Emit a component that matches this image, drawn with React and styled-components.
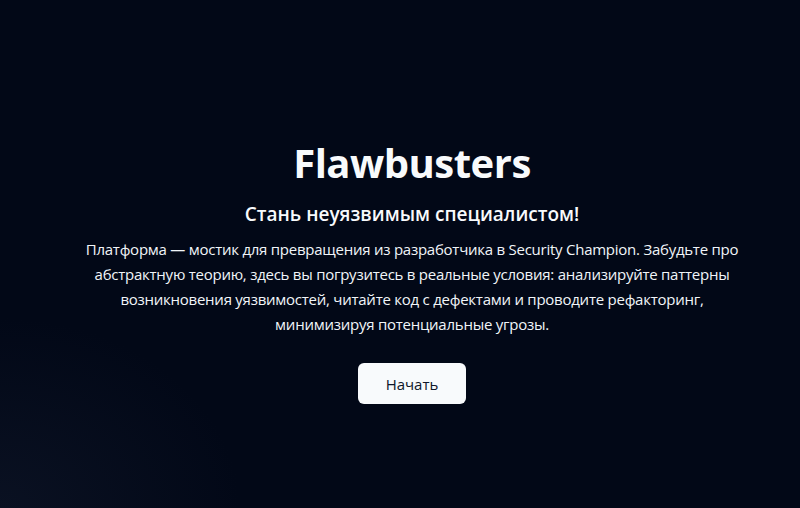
import React from "react";
import styled, { createGlobalStyle } from "styled-components";

const Global = createGlobalStyle`
  html, body { margin: 0; padding: 0; background: #020817; }
  body { font-family: "Open Sans", "Noto Sans", sans-serif; }
`;

const Page = styled.main`
  min-height: 508px;
  box-sizing: border-box;
  background: radial-gradient(ellipse 240px 190px at 0% 100%, #0a1122 0%, rgba(2,8,23,0) 100%), #020817;
  display: flex;
  flex-direction: column;
  align-items: center;
  padding: 139px 0 0 24px;
  color: #f8fafc;
  text-align: center;
`;

const Title = styled.h1`
  margin: 0;
  font-size: 40px;
  line-height: 48px;
  font-weight: 700;
  letter-spacing: -0.5px;
`;

const Subtitle = styled.h2`
  margin: 13px 0 0;
  font-size: 19px;
  line-height: 28px;
  font-weight: 600;
`;

const Lead = styled.p`
  margin: 9px 0 0;
  font-size: 15px;
  line-height: 25px;
  font-weight: 400;
  color: #f1f5f9;
  letter-spacing: -0.25px;
`;

const Button = styled.button`
  margin-top: 26px;
  height: 41px;
  width: 108px;
  border: none;
  border-radius: 6px;
  background: #f8fafc;
  color: #0f172a;
  font-family: inherit;
  font-size: 15px;
  cursor: pointer;
`;

export default function App() {
  return (
    <>
      <Global />
      <Page>
        <Title>Flawbusters</Title>
        <Subtitle>Стань неуязвимым специалистом!</Subtitle>
        <Lead>
          Платформа — мостик для превращения из разработчика в Security Champion. Забудьте про
          <br />
          абстрактную теорию, здесь вы погрузитесь в реальные условия: анализируйте паттерны
          <br />
          возникновения уязвимостей, читайте код с дефектами и проводите рефакторинг,
          <br />
          минимизируя потенциальные угрозы.
        </Lead>
        <Button>Начать</Button>
      </Page>
    </>
  );
}
